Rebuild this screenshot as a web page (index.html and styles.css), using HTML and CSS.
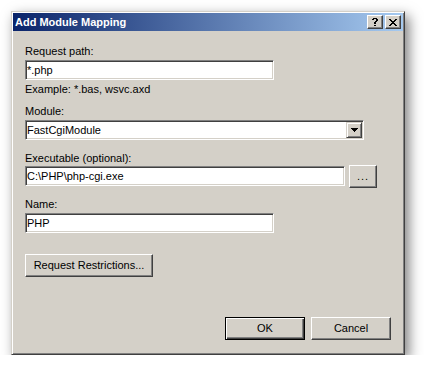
FILE: index.html
```html
<!DOCTYPE html>
<html>
<head>
<meta charset="utf-8">
<link rel="stylesheet" href="styles.css">
</head>
<body>
<div class="window">
  <div class="titlebar">
    <span class="title">Add Module Mapping</span>
    <div class="tbtn help">
      <svg width="6" height="8" viewBox="0 0 6 8" shape-rendering="crispEdges"><path fill="#000" d="M1 0h4v1H1zM0 1h2v1H0zM4 1h2v2H4zM3 3h2v1H3zM2 4h2v2H2zM2 7h2v1H2z"/></svg>
    </div>
    <div class="tbtn close">
      <svg width="8" height="7" viewBox="0 0 8 7" shape-rendering="crispEdges"><path fill="#000" d="M0 0h2v1H0zM6 0h2v1H6zM1 1h2v1H1zM5 1h2v1H5zM2 2h4v1H2zM3 3h2v1H3zM2 4h4v1H2zM1 5h2v1H1zM5 5h2v1H5zM0 6h2v1H0zM6 6h2v1H6z"/></svg>
    </div>
  </div>
  <div class="content">
    <div class="label">Request path:</div>
    <div class="field w249 gap-label">*.php</div>
    <div class="label hint">Example: *.bas, wsvc.axd</div>
    <div class="label mod">Module:</div>
    <div class="field combo gap-label">
      <span class="combo-text">FastCgiModule</span>
      <div class="dd">
        <svg width="7" height="4" viewBox="0 0 7 4" shape-rendering="crispEdges"><path fill="#000" d="M0 0h7v1H0zM1 1h5v1H1zM2 2h3v1H2zM3 3h1v1H3z"/></svg>
      </div>
    </div>
    <div class="label exe">Executable (optional):</div>
    <div class="row">
      <div class="field w320">C:\PHP\php-cgi.exe</div>
      <div class="btn browse">...</div>
    </div>
    <div class="label name">Name:</div>
    <div class="field w249 gap-label">PHP</div>
    <div class="btn restrict">Request Restrictions...</div>
    <div class="actions">
      <div class="btn default">OK</div>
      <div class="btn cancel">Cancel</div>
    </div>
  </div>
</div>
</body>
</html>
```
FILE: styles.css
```css
html, body {
  margin: 0;
  padding: 0;
  background: #ffffff;
}
body {
  font-family: "Liberation Sans", Arial, sans-serif;
  font-size: 11px;
  color: #000;
}
.window {
  margin: 11px 0 0 11px;
  width: 394px;
  height: 344px;
  box-sizing: border-box;
  background: #d4d0c8;
  border: 1px solid;
  border-color: #d4d0c8 #404040 #404040 #d4d0c8;
  padding: 1px;
  box-shadow: inset 1px 1px #ffffff, inset -1px -1px #808080, 4px 5px 12px rgba(0, 0, 0, 0.5);
  display: flex;
  flex-direction: column;
}
.titlebar {
  height: 18px;
  display: flex;
  align-items: flex-start;
  padding: 0 2px;
  background: linear-gradient(to right, #0a246a, #a6caf0);
}
.title {
  flex: 1;
  line-height: 18px;
  font-weight: bold;
  color: #fff;
  font-size: 11px;
}
.tbtn {
  width: 16px;
  height: 14px;
  margin-top: 2px;
  box-sizing: border-box;
  background: #d4d0c8;
  border: 1px solid;
  border-color: #fff #404040 #404040 #fff;
  box-shadow: inset -1px -1px #808080;
  display: flex;
  align-items: center;
  justify-content: center;
}
.tbtn.help { margin-right: 2px; }
.content {
  flex: 1;
  display: flex;
  flex-direction: column;
  align-items: flex-start;
  padding: 14px 12px 0 12px;
}
.label {
  line-height: 13px;
  height: 13px;
  white-space: nowrap;
}
.hint { margin-top: 3px; }
.mod { margin-top: 9px; }
.exe { margin-top: 12px; }
.name { margin-top: 10px; }
.gap-label { margin-top: 2px; }
.field {
  height: 20px;
  box-sizing: border-box;
  background: #fff;
  border: 1px solid;
  border-color: #808080 #fff #fff #808080;
  box-shadow: inset 1px 1px #404040, inset -1px -1px #d4d0c8;
  padding: 0 0 0 1px;
  line-height: 18px;
  white-space: nowrap;
}
.w249 { width: 249px; }
.w320 { width: 320px; margin-top: 1px; }
.combo {
  width: 339px;
  display: flex;
  padding: 1px;
}
.combo-text {
  flex: 1;
  line-height: 16px;
}
.dd {
  width: 16px;
  height: 16px;
  box-sizing: border-box;
  background: #d4d0c8;
  border: 1px solid;
  border-color: #d4d0c8 #404040 #404040 #d4d0c8;
  box-shadow: inset 1px 1px #fff, inset -1px -1px #808080;
  display: flex;
  align-items: center;
  justify-content: center;
}
.row {
  display: flex;
  align-items: flex-start;
  gap: 4px;
}
.btn {
  height: 23px;
  box-sizing: border-box;
  background: #d4d0c8;
  border: 1px solid;
  border-color: #fff #404040 #404040 #fff;
  box-shadow: inset -1px -1px #808080, inset 1px 1px #d4d0c8;
  display: flex;
  align-items: center;
  justify-content: center;
  white-space: nowrap;
  line-height: 13px;
}
.browse {
  width: 28px;
  padding-bottom: 1px;
  letter-spacing: 1px;
}
.restrict {
  width: 128px;
  margin-top: 21px;
}
.actions {
  align-self: stretch;
  display: flex;
  justify-content: flex-end;
  gap: 6px;
  margin-top: 40px;
}
.actions .btn { width: 80px; }
.btn.default {
  border: 1px solid #000;
  box-shadow: inset 1px 1px #fff, inset -1px -1px #404040, inset -2px -2px #808080;
}
```
